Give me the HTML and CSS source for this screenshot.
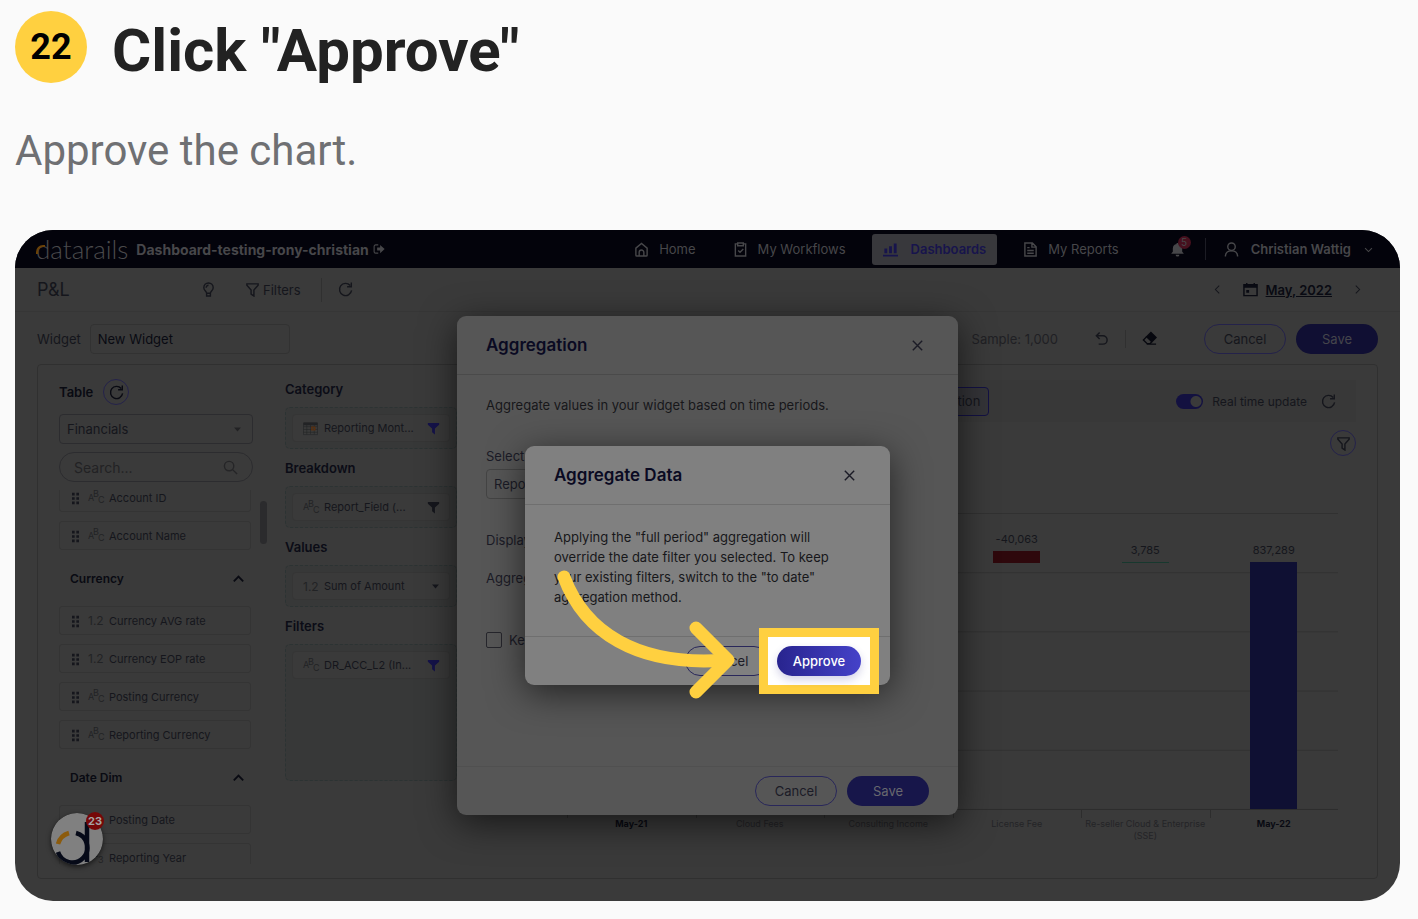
FILE: index.html
```html
<!DOCTYPE html>
<html lang="en">
  <head>
    <meta charset="UTF-8" />
    <title>Click "Approve"</title>
    <link rel="stylesheet" href="styles.css">
  </head>
  <body>
    <!-- shared icons -->
    <svg class="sprite" width="0" height="0">
      <symbol id="refresh" viewBox="0 0 16 16"><path d="M14.500 9A6.500 6.500 0 1 1 13 3.700M14.200 .5v4.500h-4.500" /></symbol>
      <symbol id="funnel" viewBox="0 0 16 16"><path d="M2 2h12v1.500L9.500 8.500V15L6.500 13V8.500L2 3.500z" /></symbol>
      <symbol id="funnel-full" viewBox="0 0 16 16"><path d="M2 2h12v2L9.500 8v6.500L6.500 12V8L2 4z" fill="currentColor" stroke="none" /></symbol>
      <symbol id="close" viewBox="0 0 16 16"><path d="M3 3l10 10M13 3L3 13" /></symbol>
      <symbol id="down" viewBox="0 0 16 16"><path d="M3 6l5 5 5-5" /></symbol>
      <symbol id="up" viewBox="0 0 16 16"><path d="M3 11l5-5 5 5" stroke-width="2" /></symbol>
      <symbol id="left" viewBox="0 0 16 16"><path d="M10.500 2.500L5 8l5.500 5.500" /></symbol>
      <symbol id="right" viewBox="0 0 16 16"><path d="M5.500 2.500L11 8l-5.500 5.500" /></symbol>
      <symbol id="caret" viewBox="0 0 16 16"><path d="M3 5h10l-5 6z" fill="currentColor" stroke="none" /></symbol>
      <symbol id="grip" viewBox="0 0 10 16"><path d="M1 2h3v3H1zM6 2h3v3H6zM1 7h3v3H1zM6 7h3v3H6zM1 12h3v3H1zM6 12h3v3H6z" fill="currentColor" stroke="none" /></symbol>
    </svg>

    <header class="step">
      <span class="step-number">22</span>
      <h1>Click "Approve"</h1>
    </header>
    <p class="description">Approve the chart.</p>

    <main class="screen">
      <nav class="navbar">
        <a class="logo" href="#">datarails</a>
        <a class="workspace" href="#">Dashboard-testing-rony-christian
          <svg class="icon small" viewBox="0 0 16 16"><path d="M7 2.500H3.500a2 2 0 0 0-2 2v7a2 2 0 0 0 2 2H7" /><path d="M5.500 6h4V2.500l6 5.500-6 5.500V10h-4z" fill="currentColor" stroke="none" /></svg>
        </a>
        <div class="nav-links">
          <a href="#"><svg class="icon" viewBox="0 0 16 16"><path d="M2 6.500L8 1.500l6 5V14a1 1 0 0 1-1 1H3a1 1 0 0 1-1-1zM5.500 15v-4a2.500 2.500 0 0 1 5 0v4" /></svg>Home</a>
          <a href="#"><svg class="icon" viewBox="0 0 16 16"><path d="M5 2H2.500v13h11V2H11M5 1h6v3H5zM5.500 9l2 2 3.500-3.500" /></svg>My Workflows</a>
          <a class="active" href="#"><svg class="icon" viewBox="0 0 16 16"><path d="M0 13.500h16v2H0zM1.500 7h3v5h-3zM6.500 4.500h3V12h-3zM11.500 1.500h3V12h-3z" fill="currentColor" stroke="none" /></svg>Dashboards</a>
          <a href="#"><svg class="icon" viewBox="0 0 16 16"><path d="M2 1h8l4 4v10H2zM9.500 1v4.500H14M4.500 6H7M4.500 9h7M4.500 12h7" /></svg>My Reports</a>
        </div>
        <button class="bell" aria-label="Notifications">
          <svg class="icon bell-icon" viewBox="0 0 16 16"><path d="M1.500 12.500V12L3 10.500V7a5 5 0 0 1 4-4.800V1h2v1.200A5 5 0 0 1 13 7v3.500l1.500 1.500v.5zM6 13.500h4a2 2 0 0 1-4 0z" fill="currentColor" stroke="none" /></svg>
          <span class="count">5</span>
        </button>
        <button class="user">
          <svg class="icon" viewBox="0 0 16 16"><circle cx="8" cy="5" r="4" /><path d="M1.500 15.500c0-4 3-6 6.500-6s6.500 2 6.500 6" /></svg>
          Christian Wattig
          <svg class="icon tiny"><use href="#down" /></svg>
        </button>
      </nav>

      <div class="toolbar">
        <h2>P&amp;L</h2>
        <button aria-label="Insights"><svg class="icon" viewBox="0 0 16 16"><path d="M6 12c0-2-3-3-3-6a5 5 0 0 1 10 0c0 3-3 4-3 6zM6 12v3h4v-3M5.500 6A2.500 2.500 0 0 1 8 3.500" /></svg></button>
        <button class="filters"><svg class="icon"><use href="#funnel" /></svg>Filters</button>
        <button class="reload" aria-label="Reload"><svg class="icon"><use href="#refresh" /></svg></button>
        <div class="period">
          <button aria-label="Previous"><svg class="icon tiny"><use href="#left" /></svg></button>
          <a href="#"><svg class="icon" viewBox="0 0 16 16"><path d="M1 3h14v11.500H1zM4 1v2M12 1v2" /><path d="M1 3h14v3H1zM3.500 8.500h3v3h-3z" fill="currentColor" stroke="none" /></svg><span>May, 2022</span></a>
          <button aria-label="Next"><svg class="icon tiny"><use href="#right" /></svg></button>
        </div>
      </div>

      <div class="widget-bar">
        <label for="widget">Widget</label>
        <input id="widget" type="text" value="New Widget">
        <span class="sample">Sample: 1,000</span>
        <button class="undo" aria-label="Undo"><svg class="icon" viewBox="0 0 16 16"><path d="M6 1.500L2.500 5 6 8.500M2.500 5h7a4.500 4.500 0 0 1 0 9H5" /></svg></button>
        <button class="erase" aria-label="Clear"><svg class="icon" viewBox="0 0 16 16"><path d="M9.500 1.500L15 7l-4.500 4.500L5 6z" fill="currentColor" /><path d="M5 6l-3.500 3.500L5.500 13.500h3l2-2M5 14h10" /></svg></button>
        <button class="pill">Cancel</button>
        <button class="pill primary">Save</button>
      </div>

      <section class="panel">
        <div class="fields">
          <div class="table-head">
            <label for="table">Table</label>
            <button class="round" aria-label="Refresh table"><svg class="icon"><use href="#refresh" /></svg></button>
          </div>
          <div class="select">
            <select id="table"><option>Financials</option></select>
            <svg class="icon tiny"><use href="#caret" /></svg>
          </div>
          <div class="search">
            <input type="search" placeholder="Search..." aria-label="Search">
            <svg class="icon" viewBox="0 0 16 16"><circle cx="6.500" cy="6.500" r="5" /><path d="M10 10l5 5" /></svg>
          </div>
          <div class="scroll">
            <ul class="list">
              <li><svg class="grip"><use href="#grip" /></svg><span class="abc"><i>A</i><i>B</i><i>C</i></span>Account ID</li>
              <li><svg class="grip"><use href="#grip" /></svg><span class="abc"><i>A</i><i>B</i><i>C</i></span>Account Name</li>
              <li class="group"><button>Currency <svg class="icon"><use href="#up" /></svg></button></li>
              <li><svg class="grip"><use href="#grip" /></svg><span class="num">1.2</span>Currency AVG rate</li>
              <li><svg class="grip"><use href="#grip" /></svg><span class="num">1.2</span>Currency EOP rate</li>
              <li><svg class="grip"><use href="#grip" /></svg><span class="abc"><i>A</i><i>B</i><i>C</i></span>Posting Currency</li>
              <li><svg class="grip"><use href="#grip" /></svg><span class="abc"><i>A</i><i>B</i><i>C</i></span>Reporting Currency</li>
              <li class="group"><button>Date Dim <svg class="icon"><use href="#up" /></svg></button></li>
              <li><svg class="grip"><use href="#grip" /></svg><span class="num"></span>Posting Date</li>
              <li><svg class="grip"><use href="#grip" /></svg><span class="abc"><i>1</i><i>2</i><i>3</i></span>Reporting Year</li>
            </ul>
            <span class="thumb"></span>
          </div>
        </div>

        <div class="zones">
          <h3>Category</h3>
          <div class="zone">
            <div class="chip">
              <svg class="icon calendar" viewBox="0 0 16 16"><path d="M.5 2.500h15v12H.5zM.5 6h15M.5 9h15M.5 12h15M4 4v10M8 4v10M12 4v10" /><path d="M.5 1.500h15v3H.5z" fill="currentColor" stroke="none" /><path class="day" d="M9.500 6.500h3v3h-3z" /></svg>
              <span>Reporting Mont...</span>
              <svg class="icon blue"><use href="#funnel-full" /></svg>
            </div>
          </div>
          <h3>Breakdown</h3>
          <div class="zone">
            <div class="chip">
              <span class="abc"><i>A</i><i>B</i><i>C</i></span>
              <span>Report_Field (...</span>
              <svg class="icon"><use href="#funnel-full" /></svg>
            </div>
          </div>
          <h3>Values</h3>
          <div class="zone">
            <div class="chip">
              <span class="num">1.2</span>
              <span>Sum of Amount</span>
              <svg class="icon tiny"><use href="#caret" /></svg>
            </div>
          </div>
          <h3>Filters</h3>
          <div class="zone tall">
            <div class="chip">
              <span class="abc"><i>A</i><i>B</i><i>C</i></span>
              <span>DR_ACC_L2 (In...</span>
              <svg class="icon blue"><use href="#funnel-full" /></svg>
            </div>
          </div>
        </div>

        <div class="chart">
          <div class="chart-bar">
            <button class="aggregation">Aggregation</button>
            <label class="live"><input type="checkbox" checked>Real time update</label>
            <button aria-label="Refresh chart"><svg class="icon"><use href="#refresh" /></svg></button>
          </div>
          <button class="round chart-filter" aria-label="Filter chart"><svg class="icon"><use href="#funnel" /></svg></button>
          <div class="plot">
            <div></div>
            <div></div>
            <div></div>
            <div class="raised"><span>-40,063</span><b class="bar red" style="height: 12px"></b></div>
            <div class="raised"><span>3,785</span><b class="bar green" style="height: 1px"></b></div>
            <div><span>837,289</span><b class="bar" style="height: 247px"></b></div>
          </div>
          <div class="axis">
            <strong>May-21</strong>
            <span>Cloud Fees</span>
            <span>Consulting Income</span>
            <span>License Fee</span>
            <span>Re-seller Cloud &amp; Enterprise (SSE)</span>
            <strong>May-22</strong>
          </div>
        </div>
      </section>

      <button class="helper" aria-label="Help">
        <svg viewBox="0 0 52 52">
          <circle cx="26" cy="26" r="26" fill="#808080" />
          <path d="M7 31A16 16 0 0 1 18 20" stroke="#8c5b0c" stroke-width="4.500" />
          <path d="M25 20A15 15 0 1 1 7 39" stroke="#060a18" stroke-width="4.500" />
          <path d="M36 9v40" stroke="#060a18" stroke-width="4.500" />
        </svg>
        <span class="helper-count">23</span>
      </button>

      <div class="overlay">
        <section class="modal">
          <header>
            <h2>Aggregation</h2>
            <button aria-label="Close"><svg class="icon"><use href="#close" /></svg></button>
          </header>
          <div class="modal-body">
            <p>Aggregate values in your widget based on time periods.</p>
            <label for="date-field">Select date</label>
            <select id="date-field"><option>Reporting Month</option></select>
            <div class="row">Display</div>
            <div class="row">Aggregation</div>
            <label class="keep"><input type="checkbox">Keep filters</label>
          </div>
          <footer>
            <button class="pill">Cancel</button>
            <button class="pill primary">Save</button>
          </footer>
        </section>
      </div>

      <div class="overlay">
        <section class="modal dialog">
          <header>
            <h2>Aggregate Data</h2>
            <button aria-label="Close"><svg class="icon"><use href="#close" /></svg></button>
          </header>
          <div class="modal-body">
            <p>Applying the "full period" aggregation will override the date filter you selected. To keep your existing filters, switch to the "to date" aggregation method.</p>
          </div>
          <footer>
            <button class="pill">Cancel</button>
            <span class="highlight"><button class="pill approve">Approve</button></span>
          </footer>
          <svg class="arrow" viewBox="0 0 184 132">
            <path d="M8 8C28 62 80 98 170 91" />
            <path d="M140 59l32 32-32 32" />
          </svg>
        </section>
      </div>
    </main>
  </body>
</html>
```

FILE: styles.css
```css
* {
  box-sizing: border-box;
}
body {
  margin: 0;
  padding: 11px 18px 18px 15px;
  background-color: #fafafa;
  font-family: Roboto, sans-serif;
}
.sprite {
  position: absolute;
}
button,
input,
select {
  font: inherit;
  color: inherit;
}
button {
  display: flex;
  align-items: center;
  justify-content: center;
  padding: 0;
  border: none;
  background: none;
}
a {
  color: inherit;
  text-decoration: none;
}
h1,
h2,
h3,
p {
  margin: 0;
}

/* step heading */
.step {
  display: flex;
  align-items: flex-start;
  gap: 25px;
}
.step-number {
  display: flex;
  align-items: center;
  justify-content: center;
  width: 72px;
  height: 72px;
  border-radius: 50%;
  background-color: #ffd040;
  color: #000;
  font-size: 36px;
  font-weight: 700;
}
.step h1 {
  padding-top: 4px;
  color: #222;
  font-size: 60px;
  line-height: 72px;
}
.description {
  margin: 37px 0 52px;
  color: #6f7073;
  font-size: 42px;
  line-height: 54px;
}

/* app */
.screen {
  position: relative;
  overflow: hidden;
  border-radius: 38px;
  padding-bottom: 22px;
  background-color: #3a3a3a;
  color: #15161c;
  font-family: Inter, sans-serif;
  font-size: 13px;
}
.icon {
  flex: none;
  width: 15px;
  height: 15px;
  fill: none;
  stroke: currentColor;
  stroke-width: 1.5;
}
.icon.small {
  width: 12px;
  height: 12px;
}
.icon.tiny {
  width: 11px;
  height: 11px;
}
.icon.blue {
  color: #15134a;
}
.navbar {
  display: flex;
  align-items: center;
  height: 38px;
  padding: 0 26px 0 21px;
  background-color: #03030b;
  color: #47474a;
}
.logo {
  position: relative;
  color: #4a4a4c;
  font-family: Lato, sans-serif;
  font-size: 26px;
  font-weight: 300;
  line-height: 34px;
}
/* orange corner of the d */
.logo::before {
  content: "";
  position: absolute;
  top: 13px;
  left: 0;
  width: 7px;
  height: 7px;
  border-top: 2px solid #6b4208;
  border-left: 2px solid #6b4208;
  border-top-left-radius: 7px;
}
.workspace {
  display: flex;
  align-items: center;
  gap: 4px;
  margin: 0 auto 0 8px;
  font-size: 14px;
  font-weight: 700;
}
.nav-links {
  display: flex;
  gap: 15px;
}
.nav-links a {
  display: flex;
  align-items: center;
  gap: 10px;
  height: 31px;
  padding: 0 11px;
  border-radius: 3px;
}
.nav-links .active {
  gap: 13px;
  background-color: #38383c;
  color: #17144c;
  font-weight: 600;
}
.bell {
  position: relative;
  height: 22px;
  margin-left: 40px;
  padding-right: 20px;
  border-right: 1px solid #1c1c24;
}
.count {
  position: absolute;
  top: -2px;
  left: 8px;
  width: 13px;
  border-radius: 50%;
  background-color: #46101e;
  font-size: 10px;
  line-height: 13px;
}
.user {
  gap: 12px;
  margin-left: 18px;
  font-weight: 600;
}

.toolbar {
  display: flex;
  align-items: center;
  height: 44px;
  padding: 0 37px 0 22px;
  border-bottom: 1px solid #363636;
}
.toolbar h2 {
  width: 164px;
  font-size: 18px;
  font-weight: 400;
}
.filters {
  gap: 3px;
  margin-left: 29px;
}
.reload {
  height: 24px;
  margin-left: 20px;
  padding-left: 16px;
  border-left: 1px solid #303030;
}
.period {
  display: flex;
  align-items: center;
  gap: 20px;
  margin-left: auto;
}
.period a {
  display: flex;
  align-items: center;
  gap: 8px;
  color: #090a12;
  font-weight: 600;
  text-decoration: underline;
}

.widget-bar {
  display: flex;
  align-items: center;
  height: 53px;
  margin-bottom: -1px;
  padding: 0 22px;
}
.widget-bar input {
  width: 200px;
  height: 30px;
  margin-left: 9px;
  padding: 0 7px;
  border: 1px solid #323232;
  border-radius: 4px;
  background: none;
  color: #090a12;
}
.sample {
  margin-left: auto;
  color: #202024;
}
.undo {
  margin-left: 36px;
}
.erase {
  height: 18px;
  margin: 0 47px 0 16px;
  padding-left: 16px;
  border-left: 1px solid #303030;
  color: #07080f;
}
.pill {
  width: 82px;
  height: 30px;
  border: 1px solid #24224a;
  border-radius: 15px;
}
.pill + .pill {
  margin-left: 10px;
}
.primary {
  border: none;
  background-color: #100f33;
  color: #45454b;
}

/* widget editor */
.panel {
  display: flex;
  gap: 18px;
  margin: 0 22px;
  padding: 14px 21px;
  border: 1px solid #303030;
  border-radius: 4px;
}
.fields {
  flex: none;
  width: 208px;
}
.table-head {
  display: flex;
  align-items: center;
  gap: 10px;
  color: #090a12;
  font-weight: 600;
}
.round {
  width: 26px;
  height: 26px;
  border: 1px solid #24224a;
  border-radius: 50%;
}
.select,
.search {
  display: flex;
  align-items: center;
  width: 194px;
  height: 30px;
  padding: 0 9px 0 7px;
  border: 1px solid #2c2c2f;
  border-radius: 4px;
}
.select {
  margin: 9px 0 8px;
}
.select .icon {
  color: #222224;
}
.select select,
.search input {
  flex: 1;
  min-width: 0;
  padding: 0;
  border: none;
  outline: none;
  background: none;
  appearance: none;
}
.search {
  margin-bottom: 8px;
  padding: 0 14px;
  border-radius: 15px;
  color: #252527;
  font-size: 14px;
}
.search input::placeholder {
  color: #222224;
}
.scroll {
  display: flex;
  gap: 9px;
  height: 374px;
  overflow: hidden;
}
.list {
  flex: 1;
  margin: -7px 0 0;
  padding: 0;
  list-style: none;
  font-size: 11px;
}
.list li {
  display: flex;
  align-items: center;
  height: 29px;
  margin-bottom: 9px;
  padding-left: 11px;
  border: 1px solid #343434;
  border-radius: 3px;
}
.list .group {
  height: 38px;
  border: none;
  color: #090a12;
}
.group button {
  flex: 1;
  justify-content: space-between;
  padding: 0 5px 0 0;
  font-size: 12px;
  font-weight: 600;
}
.grip {
  width: 9px;
  height: 14px;
  margin-right: 8px;
}
.abc,
.num {
  display: flex;
  flex: none;
  align-items: center;
  width: 21px;
  color: #222325;
  font-size: 12px;
}
.abc {
  font-size: 9px;
  line-height: 10px;
}
.abc i {
  width: 5px;
  font-style: normal;
}
.abc i:nth-child(2) {
  padding-bottom: 7px;
}
.abc i:nth-child(3) {
  padding-top: 5px;
}
.thumb {
  width: 7px;
  height: 43px;
  margin-top: 11px;
  border-radius: 4px;
  background-color: #2b2b2d;
}

.zones {
  flex: none;
  width: 172px;
}
.zones h3 {
  margin-bottom: 8px;
  color: #0b0c16;
  font-size: 13px;
  font-weight: 600;
  line-height: 20px;
}
.zone {
  min-height: 42px;
  margin-bottom: 9px;
  padding: 6px;
  border: 1px dashed #2c3333;
  border-radius: 5px;
  background-color: #373838;
}
.zone.tall {
  min-height: 137px;
  margin-bottom: 0;
}
.chip {
  display: flex;
  align-items: center;
  gap: 6px;
  height: 28px;
  padding: 0 8px 0 10px;
  border: 1px solid #353535;
  border-radius: 4px;
  background-color: #3a3a3a;
  font-size: 11px;
}
.chip .abc,
.chip .num {
  width: 15px;
}
.chip .icon:last-child {
  margin-left: auto;
}
.icon.calendar {
  color: #222325;
  stroke-width: 0.6;
}
.calendar .day {
  stroke: #5a3010;
  stroke-width: 1.5;
}

.chart {
  flex: 1;
}
.chart-bar {
  display: flex;
  align-items: center;
  height: 42px;
  margin-top: 1px;
  padding: 0 20px;
  background-color: #383838;
}
.aggregation {
  height: 29px;
  margin: 0 auto 0 401px;
  padding: 0 8px;
  border: 1px solid #131144;
  border-radius: 4px;
  background-color: #343438;
}
.live {
  display: flex;
  align-items: center;
  gap: 9px;
  margin-right: 14px;
  font-size: 12px;
}
.live input {
  width: 27px;
  height: 15px;
  margin: 0;
  border-radius: 8px;
  appearance: none;
  background: radial-gradient(circle at 20px 50%, #3a3a3a 5px, #131140 6px);
}
.chart-filter {
  margin: 8px 0 57px auto;
}
.plot {
  display: grid;
  grid-template-columns: repeat(6, 1fr);
  height: 297px;
  margin: 0 18px 0 92px;
  border-bottom: 1px solid #2d2d2d;
  background-image: linear-gradient(#313131 1px, transparent 1px);
  background-size: 100% 20%;
  font-size: 11px;
}
.plot div {
  display: flex;
  flex-direction: column;
  align-items: center;
  justify-content: flex-end;
  gap: 5px;
}
.plot .raised {
  padding-bottom: 246px;
}
.bar {
  width: 47px;
  background-color: #0f1033;
}
.bar.red {
  background-color: #2e080c;
}
.bar.green {
  background-color: #17382e;
}
.axis {
  display: grid;
  grid-template-columns: repeat(6, 1fr);
  margin: 0 18px 0 92px;
  color: #242427;
  font-size: 9px;
  line-height: 12px;
  text-align: center;
}
.axis > * {
  padding-top: 8px;
  background: linear-gradient(#2d2d2d, #2d2d2d) no-repeat 0 0 / 1px 8px;
}
.axis strong {
  color: #090a12;
}

.helper {
  position: absolute;
  bottom: 36px;
  left: 36px;
  width: 52px;
  height: 52px;
  border-radius: 50%;
  box-shadow: 0 2px 5px rgba(0, 0, 0, 0.6);
}
.helper svg {
  fill: none;
  border-radius: 50%;
}
.helper-count {
  position: absolute;
  top: -1px;
  right: -1px;
  width: 18px;
  border-radius: 50%;
  background-color: #760808;
  color: #a5a5a5;
  font-size: 11px;
  font-weight: 700;
  line-height: 18px;
}

/* modals */
.overlay {
  position: absolute;
  inset: 0;
  display: grid;
  place-items: center;
}
.modal {
  position: relative;
  width: 501px;
  border-radius: 9px;
  background-color: #565656;
  box-shadow: 0 8px 36px rgba(0, 0, 0, 0.6);
  color: #1b1b26;
}
.modal header {
  display: flex;
  align-items: center;
  justify-content: space-between;
  height: 59px;
  padding: 0 33px 0 29px;
  border-bottom: 1px solid #4a4a4a;
}
.modal h2 {
  color: #0a0a22;
  font-size: 17px;
  font-weight: 600;
}
.modal-body {
  display: flex;
  flex-direction: column;
  align-items: flex-start;
  height: 391px;
  padding: 20px 29px;
  line-height: 20px;
}
.modal-body p {
  margin-bottom: 31px;
  color: #17171a;
}
.modal-body select {
  width: 200px;
  height: 30px;
  margin: 3px 0 31px;
  padding: 0 7px;
  border: 1px solid #444;
  border-radius: 4px;
  appearance: none;
  background: none;
}
.row {
  margin-bottom: 18px;
}
.keep {
  display: flex;
  align-items: center;
  gap: 7px;
  margin-top: 24px;
}
.keep input {
  width: 16px;
  height: 16px;
  margin: 0;
  border: 1px solid #26262c;
  border-radius: 2px;
  appearance: none;
}
.modal footer {
  display: flex;
  justify-content: flex-end;
  padding: 9px 29px;
  border-top: 1px solid #505050;
}
.modal .pill {
  border-color: #29275a;
}
.modal .primary {
  background-color: #17164a;
  color: #68686e;
}
.modal.dialog {
  width: 365px;
  background-color: #808080;
}
.dialog header,
.dialog footer {
  border-color: #6f6f6f;
}
.dialog .modal-body {
  height: 131px;
  padding: 22px 48px 0 29px;
}
.dialog .pill {
  width: 84px;
}
.highlight {
  position: relative;
  z-index: 1;
  margin-left: 8px;
}
.highlight::before {
  content: "";
  position: absolute;
  inset: -18px;
  z-index: -1;
  border: 9px solid #ffd040;
  background-color: #fff;
}
.modal .approve {
  border: none;
  background: linear-gradient(90deg, #28248e, #4542c9);
  box-shadow: 0 4px 8px rgba(40, 36, 142, 0.2);
  color: #fff;
  font-weight: 500;
}
.arrow {
  position: absolute;
  top: 123px;
  left: 31px;
  z-index: 2;
  width: 184px;
  height: 132px;
  fill: none;
  stroke: #ffd040;
  stroke-width: 13;
  stroke-linecap: round;
  stroke-linejoin: round;
}
```
